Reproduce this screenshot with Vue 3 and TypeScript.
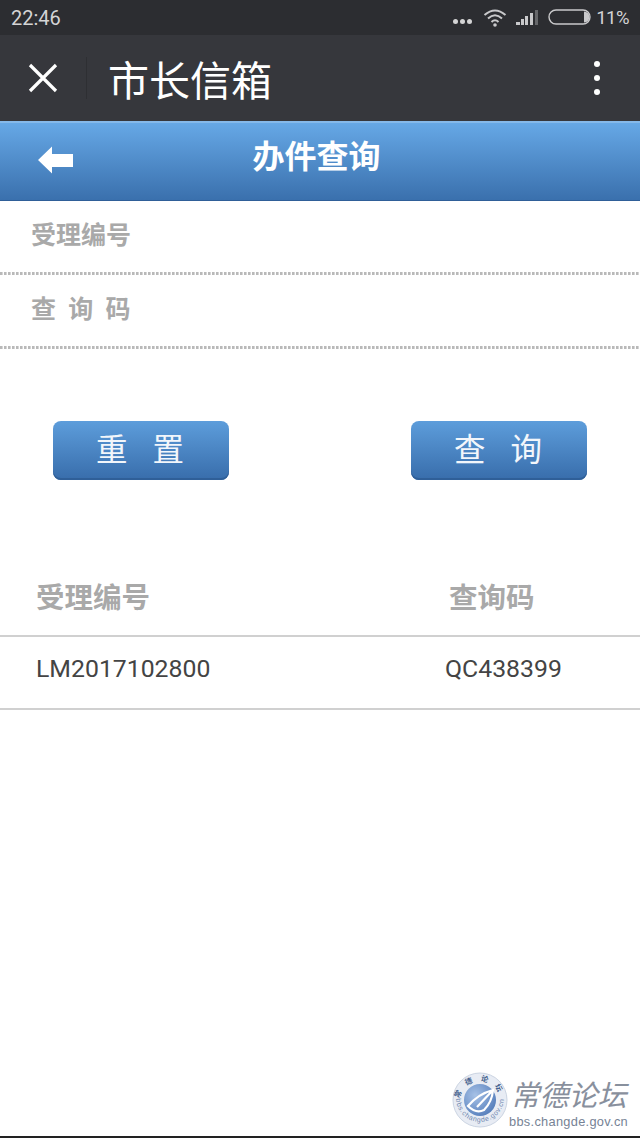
<script setup lang="ts">
const fields = ['受理编号', '查 询 码']
const buttons = ['重 置', '查 询']
const cjk = '"Noto Sans CJK SC", sans-serif'
</script>

<template>
  <div class="page" :style="{ fontFamily: `Roboto, ${cjk}` }">
    <div class="status">
      <span class="time">22:46</span>
      <div class="status-right">
        <span class="more"><i></i><i></i><i></i></span>
        <svg class="wifi" width="24" height="20" viewBox="0 0 24 20" fill="none" stroke="#c9c9cb" stroke-width="2">
          <path d="M1.5 7 Q12 -2 22.5 7" />
          <path d="M5 10.5 Q12 4 19 10.5" />
          <path d="M8.5 14 Q12 10.5 15.5 14" />
          <circle cx="12" cy="17" r="1.8" fill="#c9c9cb" stroke="none" />
        </svg>
        <svg class="signal" width="23" height="16" viewBox="0 0 23 16" fill="#c9c9cb">
          <rect x="0" y="12" width="4" height="3" />
          <rect x="5" y="9" width="3" height="6" />
          <rect x="9" y="6" width="3" height="9" />
          <rect x="14" y="3" width="3" height="12" />
          <rect x="19" y="0" width="3" height="15" fill="#66676a" />
        </svg>
        <svg class="battery" width="44" height="17" viewBox="0 0 44 17" fill="none">
          <rect x="1" y="1" width="41" height="14" rx="7" stroke="#c9c9cb" stroke-width="1.4" />
          <path d="M36 2.5 A5.5 5.5 0 0 1 36 13.5 Z" fill="#c9c9cb" />
        </svg>
        <span class="pct">11%</span>
      </div>
    </div>

    <div class="titlebar">
      <svg class="close" width="30" height="30" viewBox="0 0 30 30" stroke="#fff" stroke-width="3.2">
        <path d="M2 2 L28 28 M28 2 L2 28" />
      </svg>
      <span class="divider"></span>
      <span class="title">市长信箱</span>
      <span class="kebab"><i></i><i></i><i></i></span>
    </div>

    <div class="bluebar">
      <svg class="back" width="36" height="28" viewBox="0 0 36 28" fill="#fff">
        <path d="M0 14 L14 0.5 L14 8 L35 8 L35 21 L14 21 L14 27.5 Z" />
      </svg>
      <span class="bluetitle">办件查询</span>
    </div>

    <div v-for="f in fields" :key="f" class="field">{{ f }}</div>

    <div class="actions">
      <button v-for="b in buttons" :key="b" class="btn">{{ b }}</button>
    </div>

    <div class="thead">
      <span class="col1">受理编号</span>
      <span class="col2">查询码</span>
    </div>
    <div class="trow">
      <span class="col1">LM2017102800</span>
      <span class="col2 val">QC438399</span>
    </div>

    <div class="watermark">
      <svg class="seal" width="56" height="56" viewBox="0 0 56 56">
        <defs>
          <radialGradient id="disc" cx="0.35" cy="0.35" r="0.8">
            <stop offset="0" stop-color="#9dbbe4" />
            <stop offset="1" stop-color="#3a69b0" />
          </radialGradient>
          <path id="arcTop" d="M7.5 30 A20.5 20.5 0 0 1 48.5 30" />
          <path id="arcBottom" d="M4 26 A24 24 0 0 0 52 26" />
        </defs>
        <circle cx="28" cy="28" r="27" fill="#e6ebf3" stroke="#c6d0e0" />
        <circle cx="28" cy="28" r="16" fill="url(#disc)" />
        <path d="M16 34 Q26 22 41 18 Q40 30 32 38 Q24 42 16 34 Z M25 35 L41 18" fill="none" stroke="#fff" stroke-width="2.2" />
        <text class="seal-top"><textPath href="#arcTop" startOffset="50%" text-anchor="middle">常德论坛</textPath></text>
        <text class="seal-bottom"><textPath href="#arcBottom" startOffset="50%" text-anchor="middle">bbs.changde.gov.cn</textPath></text>
      </svg>
      <div class="brand">
        <span class="brand-name">常德论坛</span>
        <span class="brand-url">bbs.changde.gov.cn</span>
      </div>
    </div>
  </div>
</template>

<style>
html, body {
  margin: 0;
  background: #fff;
}
</style>

<style scoped>
.page {
  position: relative;
  width: 640px;
  height: 1138px;
  overflow: hidden;
  background: #fff;
  border-bottom: 2px solid #222;
  box-sizing: border-box;
}

.status {
  height: 35px;
  background: #2c2d31;
  display: flex;
  align-items: center;
  justify-content: space-between;
  padding: 0 11px;
  color: #d4d4d5;
}
.time {
  font-size: 20px;
}
.status-right {
  display: flex;
  align-items: center;
}
.more {
  display: flex;
  gap: 2px;
  margin: 8px 11px 0 0;
}
.more i {
  width: 5px;
  height: 5px;
  border-radius: 50%;
  background: #d4d4d5;
}
.wifi {
  margin-right: 9px;
}
.signal {
  margin-right: 9px;
}
.battery {
  margin-right: 4px;
}
.pct {
  font-size: 18.5px;
  letter-spacing: -0.5px;
}

.titlebar {
  height: 86px;
  background: #36373c;
  display: flex;
  align-items: center;
  padding: 0 0 0 28px;
}
.close {
  flex: none;
}
.divider {
  width: 1px;
  height: 42px;
  margin: 0 21px 0 28px;
  background: #2e2f33;
}
.title {
  font-size: 41px;
  color: #fff;
  font-weight: 400;
  padding-bottom: 1px;
}
.kebab {
  margin-left: auto;
  margin-right: 40px;
  display: flex;
  flex-direction: column;
  gap: 8px;
}
.kebab i {
  width: 6px;
  height: 6px;
  border-radius: 50%;
  background: #fff;
}

.bluebar {
  position: relative;
  height: 80px;
  box-sizing: border-box;
  border-top: 2px solid #85b9ea;
  border-bottom: 1px solid #2f5f98;
  background: linear-gradient(#66a8e6, #3a70ad);
  display: flex;
  align-items: center;
  justify-content: center;
  padding: 0 7px 16px 0;
}
.back {
  position: absolute;
  left: 38px;
  top: 23px;
}
.bluetitle {
  font-size: 32px;
  font-weight: 700;
  color: #fff;
}

.field {
  height: 74px;
  box-sizing: border-box;
  padding: 17px 0 0 31px;
  font-size: 25px;
  line-height: 36px;
  font-weight: 700;
  color: #a9a9a9;
  white-space: pre;
  word-spacing: 6px;
  background: repeating-linear-gradient(90deg, #b9b9b9 0 2px, #d6d6d6 2px 3px, transparent 3px 4px) left bottom / 100% 3px no-repeat;
}

.actions {
  display: flex;
  justify-content: space-between;
  padding: 72px 53px 0;
}
.btn {
  width: 176px;
  height: 59px;
  padding: 0 2px 7px 0;
  border: none;
  border-radius: 8px;
  background: linear-gradient(#5d9ddb, #386dab);
  box-shadow: inset 0 -2px 0 #2f5f98;
  color: #f2f6fb;
  font: 400 31.5px "Noto Sans CJK SC", sans-serif;
  white-space: pre;
  word-spacing: 18px;
}

.thead,
.trow {
  display: flex;
  box-sizing: border-box;
  border-bottom: 2px solid #d0d0d0;
}
.thead {
  height: 83px;
  margin-top: 74px;
  padding-top: 25px;
  font-size: 28.5px;
  line-height: 40px;
  font-weight: 700;
  color: #a9a9a9;
}
.trow {
  height: 73px;
  padding-top: 15px;
  font-size: 24.8px;
  line-height: 34px;
  color: #444;
}
.col1 {
  margin-left: 36px;
  width: 413px;
}
.val {
  margin-left: -4px;
}

.watermark {
  position: absolute;
  right: 12px;
  bottom: 8px;
  display: flex;
  align-items: flex-end;
  gap: 1px;
  opacity: 0.9;
}
.seal-top {
  font-size: 7.5px;
  letter-spacing: 7px;
  font-weight: 700;
  fill: #2f4f82;
}
.seal-bottom {
  font: 7px "Liberation Sans", sans-serif;
  letter-spacing: 0.6px;
  fill: #5f7aa8;
}
.brand {
  display: flex;
  flex-direction: column;
  align-items: center;
  margin-bottom: -2px;
}
.brand-name {
  font-size: 29px;
  line-height: 34px;
  color: #7c8493;
  font-style: italic;
  font-weight: 400;
}
.brand-url {
  font: 12.8px/17px "Liberation Sans", sans-serif;
  color: #68758a;
  letter-spacing: 0.3px;
}
</style>
